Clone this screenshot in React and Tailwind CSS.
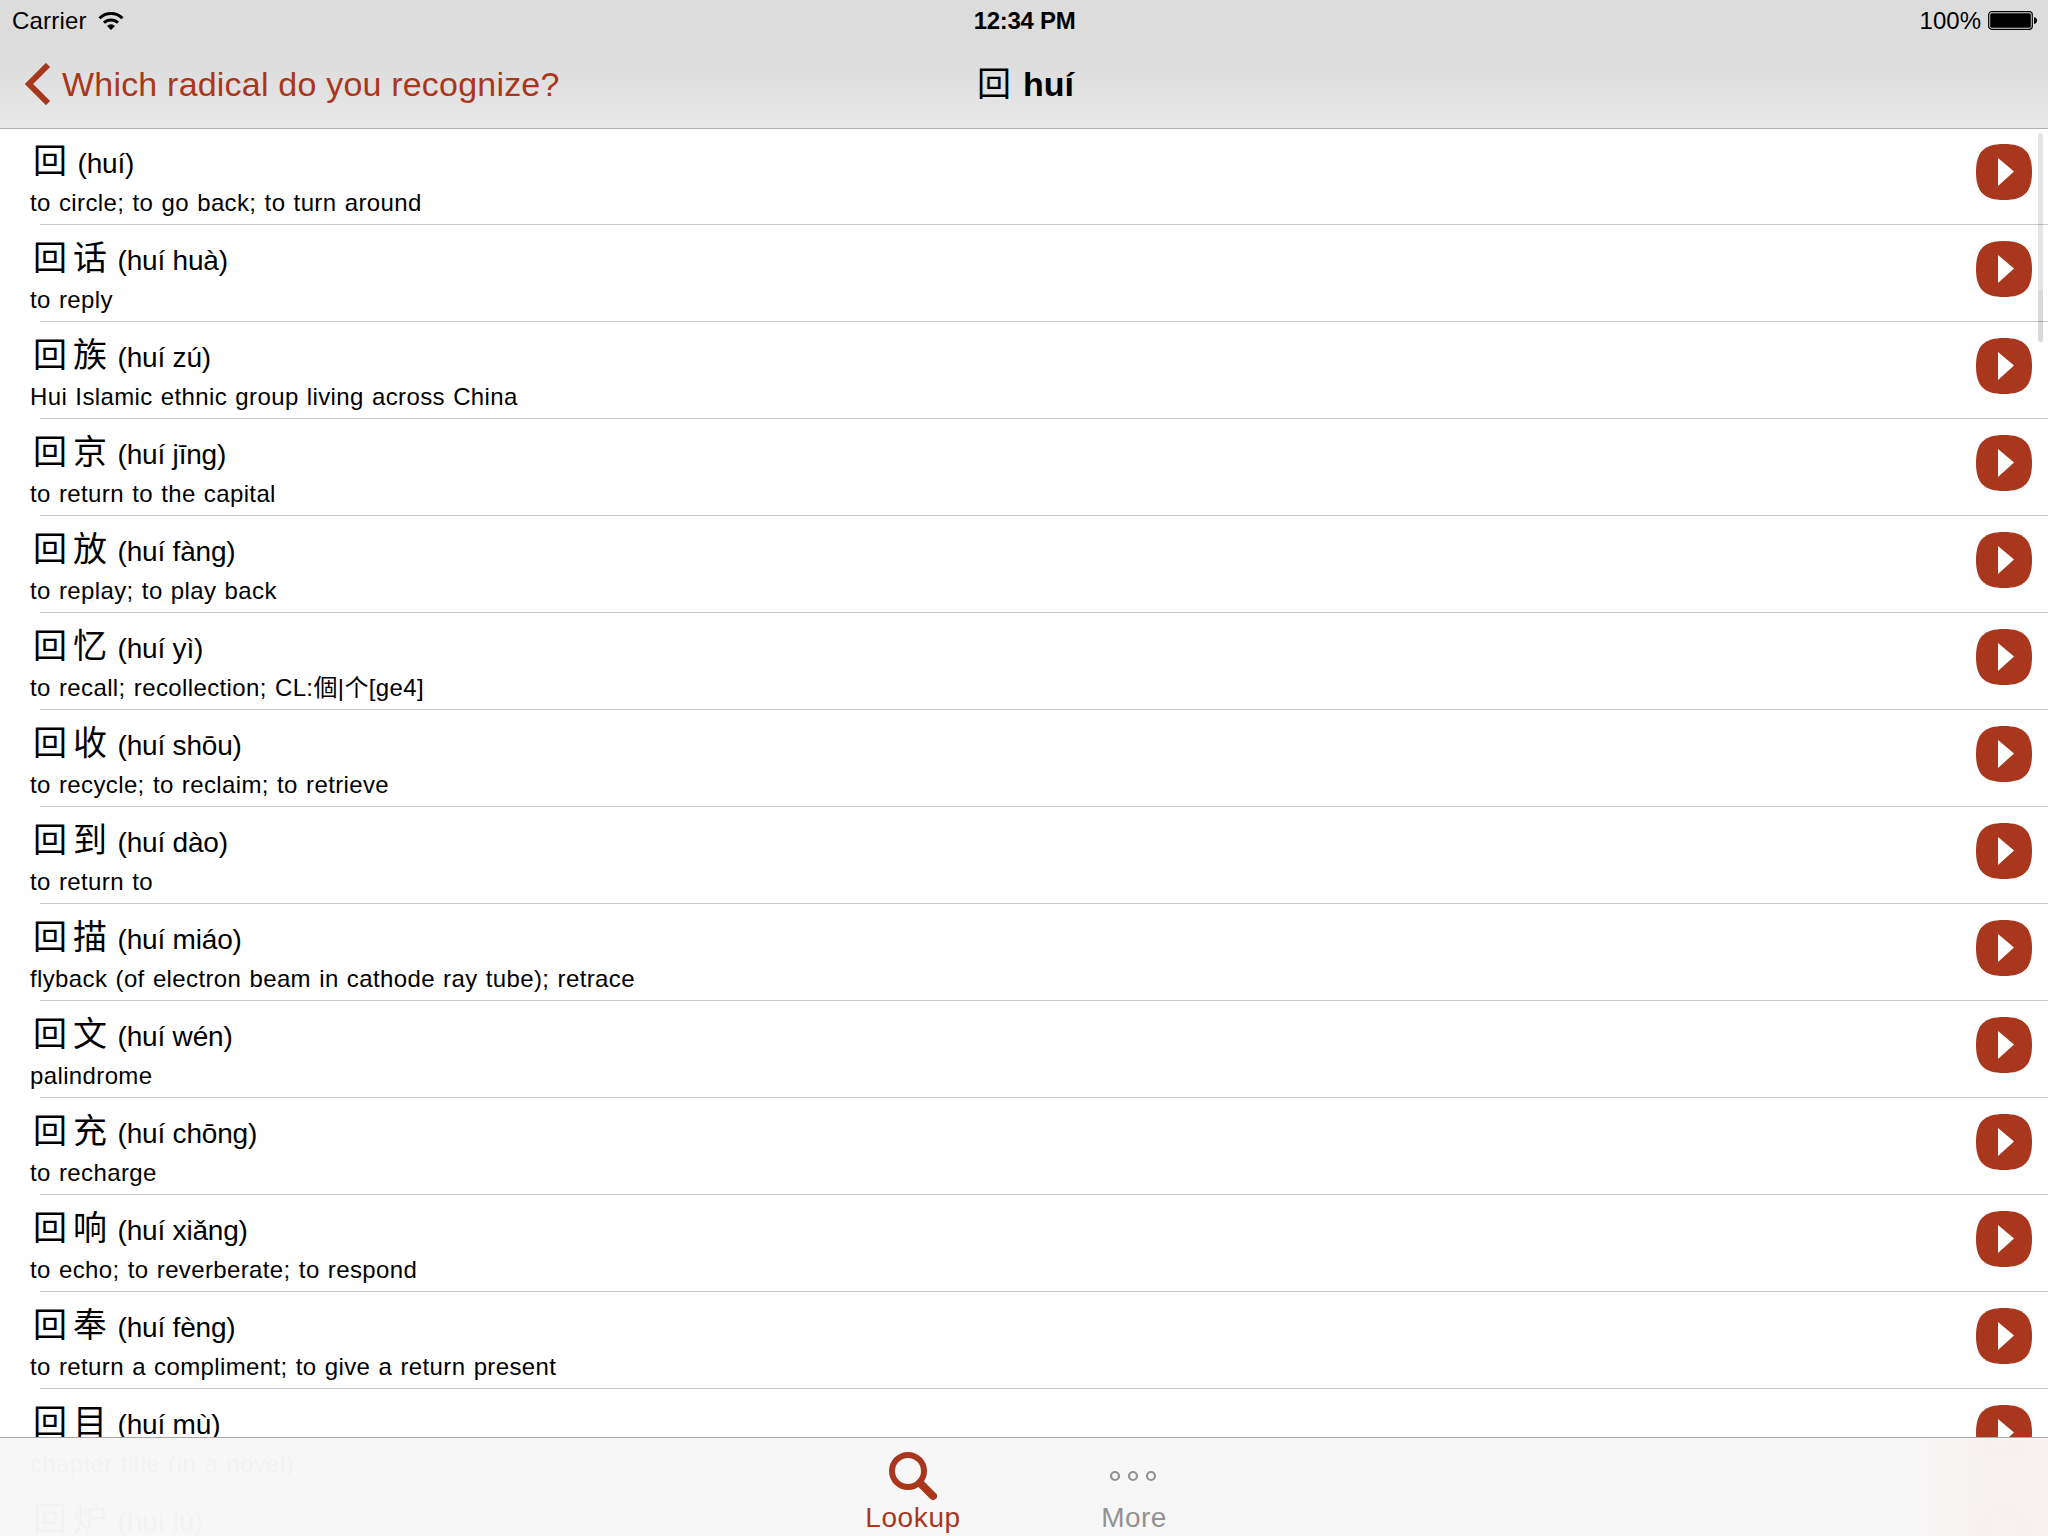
const words = [
  { hanzi: "回", pinyin: "huí", meaning: "to circle; to go back; to turn around" },
  { hanzi: "回话", pinyin: "huí huà", meaning: "to reply" },
  { hanzi: "回族", pinyin: "huí zú", meaning: "Hui Islamic ethnic group living across China" },
  { hanzi: "回京", pinyin: "huí jīng", meaning: "to return to the capital" },
  { hanzi: "回放", pinyin: "huí fàng", meaning: "to replay; to play back" },
  { hanzi: "回忆", pinyin: "huí yì", meaning: "to recall; recollection; CL:個|个[ge4]" },
  { hanzi: "回收", pinyin: "huí shōu", meaning: "to recycle; to reclaim; to retrieve" },
  { hanzi: "回到", pinyin: "huí dào", meaning: "to return to" },
  { hanzi: "回描", pinyin: "huí miáo", meaning: "flyback (of electron beam in cathode ray tube); retrace" },
  { hanzi: "回文", pinyin: "huí wén", meaning: "palindrome" },
  { hanzi: "回充", pinyin: "huí chōng", meaning: "to recharge" },
  { hanzi: "回响", pinyin: "huí xiǎng", meaning: "to echo; to reverberate; to respond" },
  { hanzi: "回奉", pinyin: "huí fèng", meaning: "to return a compliment; to give a return present" },
  { hanzi: "回目", pinyin: "huí mù", meaning: "chapter title (in a novel)" },
  { hanzi: "回炉", pinyin: "huí lú", meaning: "" },
];

function WifiIcon() {
  return (
    <svg width="26" height="20" viewBox="0 0 26 20" fill="none" stroke="black" strokeWidth="3">
      <path d="M1.5 7.2a16.3 16.3 0 0 1 23 0" />
      <path d="M6 11.8a10 10 0 0 1 14 0" />
      <path d="M13 19l-4-4.1a5.8 5.8 0 0 1 8 0z" fill="black" stroke="none" />
    </svg>
  );
}

function BatteryIcon() {
  return (
    <svg width="49" height="20" viewBox="0 0 49 20">
      <rect x="0.7" y="0.7" width="43.6" height="17.6" rx="3" fill="none" stroke="black" strokeWidth="1.2" />
      <rect x="2.2" y="2.2" width="40.6" height="14.6" rx="1.5" fill="black" />
      <path d="M46 6c4 .6 4 6.400 0 7z" fill="black" />
    </svg>
  );
}

function PlayButton() {
  return (
    <button className="mt-4 size-14 shrink-0">
      <svg width="56" height="56" viewBox="0 0 56 56">
        <path d="M28 0C48 0 56 8 56 28S48 56 28 56 0 48 0 28 8 0 28 0z" fill="#a9371e" />
        <path d="M22 14l16 13.500-16 14.500z" fill="white" />
      </svg>
    </button>
  );
}

function WordRow({ hanzi, pinyin, meaning }) {
  return (
    <li className="flex h-[97px] shrink-0 justify-between pr-4">
      <div className="relative grow pl-[30px] pt-3">
        <p className="flex h-[47px] items-baseline whitespace-pre text-[28px] leading-[42px]">
          {[...hanzi].map((c) => (
            <span key={c} className="w-10 text-center text-[34px] leading-[42px]">{c}</span>
          ))}
          <span className="tracking-[-0.2px]"> ({pinyin})</span>
        </p>
        <p className="h-8 whitespace-nowrap text-[24px] leading-8 tracking-[0.37px] [word-spacing:1.2px]">{meaning}</p>
        <div className="absolute bottom-0 left-10 h-px w-[2008px] bg-[#c8c7cc]" />
      </div>
      <PlayButton />
    </li>
  );
}

export default function App() {
  return (
    <div className="relative flex h-[1536px] w-[2048px] flex-col overflow-hidden bg-white font-['Liberation_Sans','Noto_Sans_CJK_SC',sans-serif] text-black">
      <header className="h-32 shrink-0 bg-linear-to-b from-[#dcdcdc] from-45% to-[#e8e8e8]">
        {/* Status bar */}
        <div className="grid h-[42px] grid-cols-3 items-center pl-3 pr-[11px] text-[24px] leading-[42px]">
          <div className="flex items-center gap-[11px]">
            <span className="tracking-[0.2px]">Carrier</span>
            <WifiIcon />
          </div>
          <span className="text-center font-bold tracking-[-0.3px]">12:34 PM</span>
          <div className="flex items-center justify-end gap-[7px]">
            <span>100%</span>
            <BatteryIcon />
          </div>
        </div>

        {/* Nav bar */}
        <div className="grid h-[86px] grid-cols-3 items-center pb-0.5 text-[34px]">
          <button className="flex items-center gap-[11px] whitespace-nowrap pl-6 text-[#a9371e]">
            <svg width="27" height="42" viewBox="0 0 27 42" fill="none" stroke="currentColor" strokeWidth="6">
              <path d="M24 2L5 21l19 19" />
            </svg>
            <span className="tracking-[0.2px]">Which radical do you recognize?</span>
          </button>
          <h1 className="flex items-baseline justify-center pr-1 font-bold">
            <span className="w-12 text-center font-normal">回</span>
            <span className="pl-[5px]">huí</span>
          </h1>
        </div>
      </header>

      <main className="h-[1408px] overflow-hidden">
        <ul className="flex flex-col">
          {words.map((w) => (
            <WordRow key={w.hanzi} {...w} />
          ))}
        </ul>
      </main>

      {/* Header hairline and scroll indicator sit over the list */}
      <div className="absolute left-0 top-32 h-px w-full bg-[#b2b2b2]" />
      <div className="absolute right-[5px] top-[133px] h-[209px] w-[5px] overflow-hidden rounded-full bg-black/10">
        <div className="mt-[157px] h-[52px] bg-black/5" />
      </div>

      <nav className="absolute bottom-0 left-0 flex h-[99px] w-full justify-center gap-[68px] border-t border-[#a9a9a9] bg-[#f7f7f7]/98 pr-px">
        <div className="absolute right-0 top-0 h-full w-40 bg-linear-to-r from-transparent to-[#f8f0ee]/60 to-60%" />
        <button className="flex w-[153px] flex-col items-center text-[#a9371e]">
          <svg className="mt-3.5" width="48" height="50" viewBox="0 0 48 50" fill="none" stroke="currentColor">
            <circle cx="19" cy="19" r="16" strokeWidth="6" />
            <path d="M31 31l13 13" strokeWidth="8" strokeLinecap="round" />
          </svg>
          <span className="text-[28px] leading-8 tracking-[0.6px]">Lookup</span>
        </button>
        <button className="flex w-[153px] flex-col items-center text-[#929292]">
          <svg className="mt-3.5" width="48" height="50" viewBox="0 0 48 50" fill="none" stroke="currentColor" strokeWidth="2.200">
            <circle cx="5" cy="24" r="4" />
            <circle cx="23" cy="24" r="4" />
            <circle cx="41" cy="24" r="4" />
          </svg>
          <span className="text-[28px] leading-8 tracking-[0.4px]">More</span>
        </button>
      </nav>
    </div>
  );
}
